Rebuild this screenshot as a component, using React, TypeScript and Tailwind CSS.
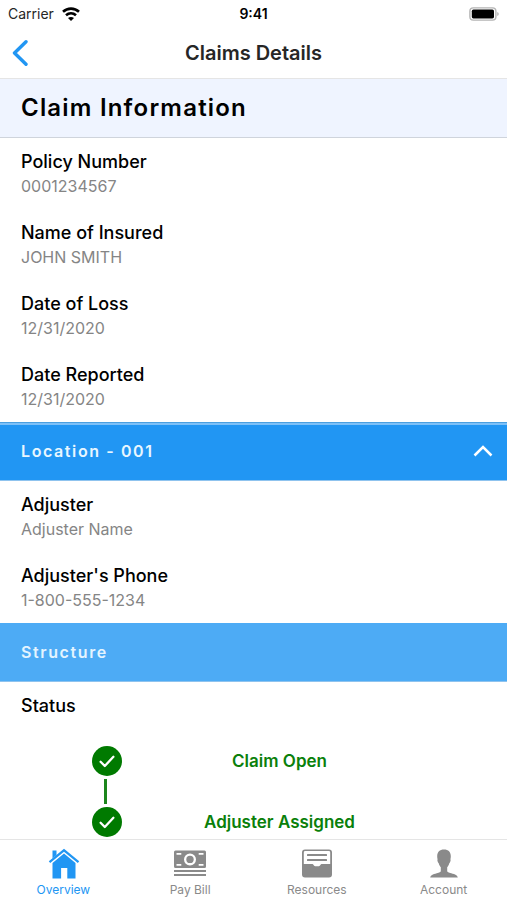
import { ReactNode } from "react";
import clsx from "clsx";

const claimFields = [
  { label: "Policy Number", value: "0001234567" },
  { label: "Name of Insured", value: "JOHN SMITH" },
  { label: "Date of Loss", value: "12/31/2020" },
  { label: "Date Reported", value: "12/31/2020" },
];

const adjusterFields = [
  { label: "Adjuster", value: "Adjuster Name" },
  { label: "Adjuster's Phone", value: "1-800-555-1234" },
];

const steps = ["Claim Open", "Adjuster Assigned"];

function StatusBar() {
  return (
    <div className="grid h-7 grid-cols-3 items-center px-2 text-sm text-neutral-800">
      <div className="flex items-center gap-2">
        <span>Carrier</span>
        <svg width="18" height="14" viewBox="0 0 18 14" fill="none" stroke="#000" strokeWidth="2.6">
          <path d="M1 4.8C5.5.6 12.5.6 17 4.8" />
          <path d="M4 8.3c2.9-2.6 7.1-2.6 10 0" />
          <path d="M9 14 6 11c1.7-1.5 4.3-1.5 6 0z" fill="#000" stroke="none" />
        </svg>
      </div>
      <span className="text-center font-semibold text-black">9:41</span>
      <svg className="justify-self-end" width="30" height="14" viewBox="0 0 30 14">
        <rect x=".9" y=".9" width="26" height="12.2" rx="3.4" fill="#fff" stroke="#b4b4b4" strokeWidth="1.4" />
        <rect x="2.8" y="2.6" width="22.2" height="8.8" rx="1.6" fill="#000" />
        <path d="M28.4 5v4c1.6-.7 1.6-3.3 0-4z" fill="#a3a3a3" />
      </svg>
    </div>
  );
}

function Field({ label, value }: { label: string; value: string }) {
  return (
    <div className="px-[21px] pt-3 pb-[11px]">
      <dt className="text-lg leading-6 font-medium text-black">{label}</dt>
      <dd className="text-base leading-6 text-[#858585]">{value}</dd>
    </div>
  );
}

function StepCheck() {
  return (
    <svg width="30" height="30" viewBox="0 0 30 30">
      <circle cx="15" cy="15" r="15" fill="#007a00" />
      <path
        d="M8.6 15.7 12.8 20 21.4 10.8"
        fill="none"
        stroke="#fff"
        strokeWidth="2.3"
        strokeLinecap="round"
        strokeLinejoin="round"
      />
    </svg>
  );
}

function TabLink({ label, active, children }: { label: string; active?: boolean; children: ReactNode }) {
  return (
    <a
      href="#"
      aria-current={active ? "page" : undefined}
      className={clsx(
        "flex flex-1 flex-col items-center pt-2 pb-[2px] text-xs",
        active ? "text-[#2196f3]" : "text-[#8a8a8a]"
      )}
    >
      <svg width="34" height="34" viewBox="0 0 34 34" fill="currentColor">
        {children}
      </svg>
      <span className="leading-4">{label}</span>
    </a>
  );
}

function TabBar() {
  return (
    <nav className="sticky bottom-0 flex border-t border-neutral-200 bg-white">
      <TabLink label="Overview" active>
        <path d="M6.500 2.500h4v4.500l-4 3.400z" />
        <path d="M18 .8 2.800 13.300l1.400 1.700L18 3.700 31.800 15l1.400-1.700z" />
        <path d="M18 5.400 6.500 15v15.500h8.600V20h6.200v10.500h8.200V15z" />
      </TabLink>
      <TabLink label="Pay Bill">
        <path
          fillRule="evenodd"
          d="M2.500 2.500h29A1.500 1.500 0 0 1 33 4v14.500a1.500 1.500 0 0 1-1.500 1.500h-29A1.500 1.500 0 0 1 1 18.500V4a1.500 1.500 0 0 1 1.500-1.500zM3.500 5v1.800h4.800V5zM25.700 5v1.800h4.800V5zM3.500 16v1.800h4.800V16zM25.700 16v1.800h4.800V16zM17 5.400a6 6 0 1 0 0 12 6 6 0 0 0 0-12z"
        />
        <circle cx="17" cy="11.400" r="3.700" />
        <rect x="1" y="22" width="32" height="2" />
        <rect x="1" y="26" width="32" height="2" />
      </TabLink>
      <TabLink label="Resources">
        <path
          fillRule="evenodd"
          d="M5 1.500h24a3 3 0 0 1 3 3v22a3 3 0 0 1-3 3H5a3 3 0 0 1-3-3v-22a3 3 0 0 1 3-3zM5.200 3.100a1.400 1.400 0 0 0-1.400 1.400v11.500h8.700c.8 0 1.200 2.200 2.600 2.200h3.800c1.400 0 1.800-2.200 2.600-2.200h8.700V4.500a1.400 1.400 0 0 0-1.400-1.400z"
        />
        <rect x="7" y="6" width="20" height="2" rx=".5" />
        <rect x="7" y="11" width="20" height="2" rx=".5" />
      </TabLink>
      <TabLink label="Account">
        <path d="M17 1.500c-4.400 0-6.800 2.600-6.800 6.800 0 1.400.2 2.300.4 3-.7.600.3 3.400 1.100 3.900.4 1.900 1.300 3 2.100 4v3.800c0 1-1.400 1.600-4 2.200-4.300 1-6.100 2-6.600 4.300h27.600c-.5-2.300-2.300-3.300-6.600-4.300-2.600-.6-4-1.200-4-2.200v-3.800c.8-1 1.700-2.100 2.100-4 .8-.5 1.800-3.300 1.100-3.900.2-.7.400-1.600.4-3 0-4.200-2.400-6.800-6.800-6.800z" />
      </TabLink>
    </nav>
  );
}

export default function App() {
  return (
    <div className="flex min-h-screen flex-col bg-white font-['Inter',sans-serif]">
      <StatusBar />
      <header className="grid h-[51px] grid-cols-[1fr_auto_1fr] items-center border-b border-neutral-200 px-3">
        <button type="button" aria-label="Back" className="justify-self-start">
          <svg width="16" height="26" viewBox="0 0 16 26" fill="none" stroke="#2196f3" strokeWidth="3.4">
            <path d="M14 1.800 2.500 13 14 24.200" strokeLinecap="round" strokeLinejoin="round" />
          </svg>
        </button>
        <h1 className="text-xl font-semibold text-neutral-800">Claims Details</h1>
      </header>

      <main className="flex-1">
        <h2 className="border-b border-[#cfd4dc] bg-[#eff4ff] px-[21px] py-3 text-2xl leading-[34px] font-semibold tracking-wider text-black">
          Claim Information
        </h2>
        <dl>
          {claimFields.map((field) => (
            <Field key={field.label} {...field} />
          ))}
        </dl>

        <div className="border-t border-[#4a9fe0] bg-[#7cc0f8] pt-[2px]">
          <button
            type="button"
            aria-expanded="true"
            className="flex w-full items-center justify-between border-b border-[#8fc3ee] bg-[#2196f3] px-[21px] pt-[14px] pb-[17px] text-base font-semibold tracking-widest text-[#e8f6ff]"
          >
            Location - 001
            <svg className="-mr-2" width="22" height="14" viewBox="0 0 22 14" fill="none" stroke="#fff" strokeWidth="2.500">
              <path d="M2.500 11.500 11 3l8.500 8.500" />
            </svg>
          </button>
        </div>
        <dl>
          {adjusterFields.map((field) => (
            <Field key={field.label} {...field} />
          ))}
        </dl>

        <h3 className="border-b border-[#8fc3ee] bg-[#4dabf5] px-[21px] py-[17px] text-base leading-6 font-semibold tracking-widest text-[#e4f4ff]">
          Structure
        </h3>
        <h4 className="px-[21px] pt-3 text-lg leading-6 font-medium text-black">Status</h4>
        <ol className="flex flex-col px-5 pt-7">
          {steps.map((step, index) => (
            <li key={step}>
              {index > 0 && <div className="my-[3px] ml-[84px] h-[25px] w-[3px] bg-[#1d861d]" />}
              <div className="flex items-center pl-[72px]">
                <StepCheck />
                <span className="flex-1 pr-[50px] text-center text-[17px] leading-6 font-semibold text-[#0a800a]">
                  {step}
                </span>
              </div>
            </li>
          ))}
        </ol>
      </main>

      <TabBar />
    </div>
  );
}
